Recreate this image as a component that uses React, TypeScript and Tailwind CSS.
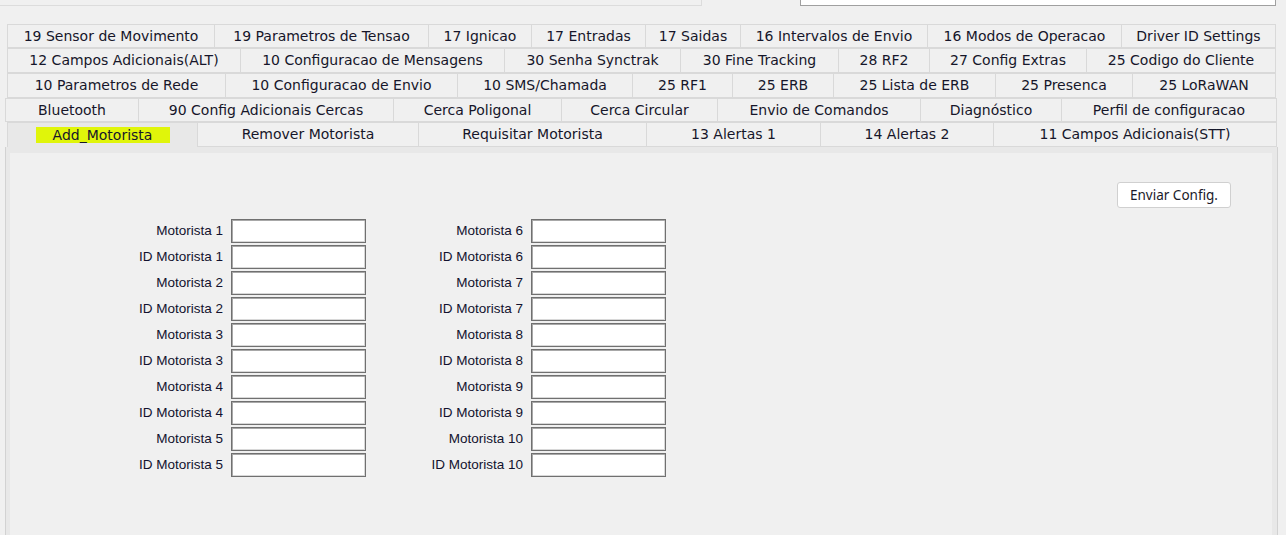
import React from 'react';

type Tab = { label: string; w: number };

const rows: { left: number; tabs: Tab[]; h: number }[] = [
    {
        left: 7,
        h: 24,
        tabs: [
            { label: '19 Sensor de Movimento', w: 208 },
            { label: '19 Parametros de Tensao', w: 214 },
            { label: '17 Ignicao', w: 103 },
            { label: '17 Entradas', w: 114 },
            { label: '17 Saidas', w: 95 },
            { label: '16 Intervalos de Envio', w: 187 },
            { label: '16 Modos de Operacao', w: 194 },
            { label: 'Driver ID Settings', w: 154 },
        ],
    },
    {
        left: 7,
        h: 25,
        tabs: [
            { label: '12 Campos Adicionais(ALT)', w: 234 },
            { label: '10 Configuracao de Mensagens', w: 264 },
            { label: '30 Senha Synctrak', w: 176 },
            { label: '30 Fine Tracking', w: 158 },
            { label: '28 RF2', w: 91 },
            { label: '27 Config Extras', w: 157 },
            { label: '25 Codigo do Cliente', w: 189 },
        ],
    },
    {
        left: 7,
        h: 25,
        tabs: [
            { label: '10 Parametros de Rede', w: 219 },
            { label: '10 Configuracao de Envio', w: 232 },
            { label: '10 SMS/Chamada', w: 175 },
            { label: '25 RF1', w: 100 },
            { label: '25 ERB', w: 101 },
            { label: '25 Lista de ERB', w: 162 },
            { label: '25 Presenca', w: 137 },
            { label: '25 LoRaWAN', w: 143 },
        ],
    },
    {
        left: 5,
        h: 24,
        tabs: [
            { label: 'Bluetooth', w: 134 },
            { label: '90 Config Adicionais Cercas', w: 255 },
            { label: 'Cerca Poligonal', w: 168 },
            { label: 'Cerca Circular', w: 156 },
            { label: 'Envio de Comandos', w: 203 },
            { label: 'Diagnóstico', w: 141 },
            { label: 'Perfil de configuracao', w: 215 },
        ],
    },
];

const lastRow: Tab[] = [
    { label: 'Add_Motorista', w: 191 },
    { label: 'Remover Motorista', w: 221 },
    { label: 'Requisitar Motorista', w: 228 },
    { label: '13 Alertas 1', w: 174 },
    { label: '14 Alertas 2', w: 173 },
    { label: '11 Campos Adicionais(STT)', w: 283 },
];

const tabFont = { fontFamily: '"DejaVu Sans", Tahoma, sans-serif' };

const Field: React.FC<{ label: string }> = ({ label }) => (
    <div className="flex items-center gap-[8px] h-[24px]">
        <span className="w-[100px] text-right text-[13.5px] text-[#12122e] leading-none whitespace-nowrap">
            {label}
        </span>
        <div className="w-[135px] h-[24px] bg-white border border-[#707070] shadow-[inset_1px_1px_0_#a8a8a8,inset_-1px_-1px_0_#d8d8d8]" />
    </div>
);

const Column: React.FC<{ start: number }> = ({ start }) => (
    <div className="flex flex-col gap-[2px]">
        {[0, 1, 2, 3, 4].map((i) => (
            <React.Fragment key={i}>
                <Field label={`Motorista ${start + i}`} />
                <Field label={`ID Motorista ${start + i}`} />
            </React.Fragment>
        ))}
    </div>
);

export default function App() {
    return (
        <div
            className="w-[1286px] h-[535px] bg-[#f0f0f0] overflow-hidden"
            style={{ fontFamily: '"Liberation Sans", Arial, sans-serif' }}
        >
            {/* faixa superior */}
            <div className="h-[24px] flex items-start">
                <div className="w-[702px] h-[6px] border-b border-r border-[#dcdcdc]" />
                <div className="w-[98px]" />
                <div className="w-[476px] h-[6px] bg-white border border-t-0 border-[#a0a0a0]" />
            </div>

            {/* abas */}
            {rows.map((row, ri) => (
                <div
                    key={ri}
                    className="flex"
                    style={{ paddingLeft: row.left, height: row.h }}
                >
                    {row.tabs.map((t, ti) => (
                        <div
                            key={t.label}
                            className={`h-full flex items-center justify-center border border-[#d9d9d9] bg-[#f0f0f0] text-[14px] text-[#16162a] whitespace-nowrap ${ti > 0 ? '-ml-px' : ''}`}
                            style={{ ...tabFont, width: t.w + (ti > 0 ? 1 : 0) }}
                        >
                            {t.label}
                        </div>
                    ))}
                </div>
            ))}
            <div className="flex pl-[7px] h-[25px]">
                {lastRow.map((t, ti) =>
                    ti === 0 ? (
                        <div
                            key={t.label}
                            className="h-full flex items-center justify-center border border-b-0 border-[#d9d9d9] bg-[#e8e8e8]"
                            style={{ ...tabFont, width: t.w }}
                        >
                            <span className="w-[134px] h-[16px] flex items-center justify-center bg-[#e0f50a] text-[14px] text-[#16162a]">
                                Add_Motorista
                            </span>
                        </div>
                    ) : (
                        <div
                            key={t.label}
                            className="h-full -ml-px flex items-center justify-center border border-[#d9d9d9] bg-[#f0f0f0] text-[14px] text-[#16162a] whitespace-nowrap"
                            style={{ ...tabFont, width: t.w + 1 }}
                        >
                            {t.label}
                        </div>
                    )
                )}
            </div>

            {/* painel */}
            <div className="ml-[5px] w-[1273px] h-[400px] border-l border-r border-[#d2d2d2] bg-[#e8e8e8] pt-[6px] pl-[4px] pr-[5px]">
                <div className="h-full bg-[#f0f0f0] flex flex-col">
                    <div className="flex justify-end pt-[29px] pr-[41px]">
                        <button
                            className="w-[114px] h-[26px] bg-white border border-[#d0d0d0] rounded-[3px] text-[13.5px] text-[#1a1a2a]"
                            style={{ fontFamily: '"Noto Sans", "Open Sans", sans-serif' }}
                        >
                            Enviar Config.
                        </button>
                    </div>
                    <div className="mt-[11px] pl-[113px] flex gap-[57px]">
                        <Column start={1} />
                        <Column start={6} />
                    </div>
                </div>
            </div>
        </div>
    );
}
